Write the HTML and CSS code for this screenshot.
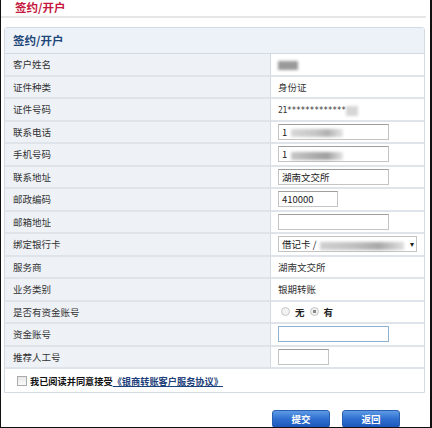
FILE: index.html
```html
<!DOCTYPE html>
<html lang="zh-CN">
<head>
    <meta charset="UTF-8">
    <title>签约/开户</title>
    <link rel="stylesheet" href="styles.css">
</head>
<body>
<div class="frame">

    <!-- Page title -->
    <div class="page-title">签约/开户</div>

    <!-- Form panel -->
    <div class="panel">
        <div class="panel-head">签约/开户</div>
        <table class="form-table">
            <tr><td class="label">客户姓名</td><td class="value"><span class="blur blur-name"></span></td></tr>
            <tr><td class="label">证件种类</td><td class="value">身份证</td></tr>
            <tr><td class="label">证件号码</td><td class="value"><span class="mono">21*************</span><span class="blur blur-light"></span></td></tr>
            <tr><td class="label">联系电话</td><td class="value"><div class="input w110">1<span class="blur blur-phone"></span></div></td></tr>
            <tr><td class="label">手机号码</td><td class="value"><div class="input w110">1<span class="blur blur-phone dark"></span></div></td></tr>
            <tr><td class="label">联系地址</td><td class="value"><div class="input w110">湖南文交所</div></td></tr>
            <tr><td class="label">邮政编码</td><td class="value"><div class="input w60">410000</div></td></tr>
            <tr><td class="label">邮箱地址</td><td class="value"><div class="input w110"></div></td></tr>
            <tr><td class="label">绑定银行卡</td><td class="value"><div class="select">借记卡 /<span class="blur blur-card"></span><span class="arrow">▾</span></div></td></tr>
            <tr><td class="label">服务商</td><td class="value">湖南文交所</td></tr>
            <tr><td class="label">业务类别</td><td class="value">银期转账</td></tr>
            <tr><td class="label">是否有资金账号</td><td class="value">
                <span class="radios">
                    <span class="radio"></span><span class="radio-text">无</span>
                    <span class="radio checked"></span><span class="radio-text">有</span>
                </span>
            </td></tr>
            <tr><td class="label">资金账号</td><td class="value"><div class="input w110 focus"></div></td></tr>
            <tr><td class="label">推荐人工号</td><td class="value"><div class="input w50"></div></td></tr>
        </table>
        <div class="agree">
            <span class="checkbox"></span>
            <span class="agree-text">我已阅读并同意接受</span><a class="agree-link" href="#">《银商转账客户服务协议》</a>
        </div>
    </div>

    <!-- Buttons -->
    <div class="actions">
        <button class="btn">提交</button>
        <button class="btn">返回</button>
    </div>

</div>
</body>
</html>
```

FILE: styles.css
```css
body {
    margin: 0;
    background-color: #ffffff;
    font-family: "Noto Sans CJK SC", "Noto Sans", sans-serif;
    font-size: 9.5px;
    color: #333333;
}

/* Outer window frame */
.frame {
    width: 432px;
    height: 428px;
    box-sizing: border-box;
    border-left: 1px solid #111;
    border-right: 2px solid #111;
    border-bottom: 1px solid #111;
    overflow: hidden;
}

/* Page title */
.page-title {
    height: 16px;
    line-height: 14px;
    padding-left: 14px;
    font-size: 11.5px;
    font-weight: bold;
    color: #c4173d;
    border-bottom: 2px solid #e6e6e6;
    margin-right: 4px;
}

/* Panel */
.panel {
    margin: 9px 5px 0 3px;
    border: 1px solid #d3dae3;
    border-radius: 3px 3px 0 0;
}

.panel-head {
    height: 25px;
    line-height: 25px;
    padding-left: 8px;
    font-size: 11.5px;
    font-weight: bold;
    color: #1d4679;
    background-color: #edf2f8;
    border-bottom: 1px solid #d3dae3;
}

/* Form rows */
.form-table {
    width: 100%;
    border-collapse: separate;
    border-spacing: 0;
}

.form-table td {
    height: 20.5px;
    padding: 0;
    border-bottom: 2px solid #dfe4ea;
    vertical-align: middle;
}

.form-table .label {
    width: 257px;
    padding-left: 8px;
    background-color: #eef2f7;
    border-right: 1px solid #d3dae3;
    color: #333;
}

.form-table .value {
    padding-left: 7px;
    color: #333;
}

.mono {
    font-family: "DejaVu Sans Mono", monospace;
    font-size: 8px;
    letter-spacing: -0.3px;
}

/* Blurred (masked) personal data */
.blur {
    display: inline-block;
    vertical-align: middle;
    filter: blur(1.5px);
}

.blur-name {
    width: 20px;
    height: 9px;
    background-color: #9a9a9a;
}

.blur-light {
    width: 12px;
    height: 10px;
    background-color: #d6d6d6;
}

.blur-phone {
    width: 52px;
    height: 8px;
    margin-left: 4px;
    background: linear-gradient(90deg, #d8d8d8, #c4c4c4 50%, #b0b0b0 70%, #e6e6e6);
}

.blur-phone.dark {
    background: linear-gradient(90deg, #c8c8c8, #a8a8a8 50%, #a0a0a0 70%, #e6e6e6);
}

.blur-card {
    width: 84px;
    height: 8px;
    margin-left: 4px;
    background: linear-gradient(90deg, #d0d0d0, #c0c0c0 40%, #a8a8a8 70%, #e0e0e0);
}

/* Inputs */
.input {
    height: 14px;
    line-height: 14px;
    box-sizing: content-box;
    padding-left: 3px;
    border: 1px solid #c4c4c4;
    border-top-color: #9e9e9e;
    background-color: #fff;
    color: #222;
}

.w110 { width: 106px; }
.w60 { width: 55px; }
.w50 { width: 46px; }

.input.focus {
    border-color: #8fb1d1;
}

.select {
    width: 134px;
    height: 14px;
    line-height: 14px;
    padding-left: 3px;
    border: 1px solid #c4c4c4;
    position: relative;
    color: #222;
}

.select .arrow {
    position: absolute;
    right: 2px;
    top: 0;
    font-size: 8px;
    color: #222;
}

/* Radio buttons */
.radios {
    display: inline-flex;
    align-items: center;
    padding-left: 3px;
}

.radio {
    width: 7px;
    height: 7px;
    border: 1px solid #c6c6c6;
    border-radius: 50%;
    background-color: #f2f2f2;
    box-sizing: content-box;
}

.radio.checked {
    background: radial-gradient(circle, #8a8a8a 0 1.5px, #f0f0f0 2px);
}

.radio-text {
    margin: 0 5px 0 5px;
    font-weight: bold;
    color: #222;
}

/* Agreement line */
.agree {
    height: 23px;
    display: flex;
    align-items: center;
    padding-left: 12px;
    font-size: 9.2px;
    font-weight: bold;
    color: #111;
}

.checkbox {
    width: 8px;
    height: 8px;
    border: 1px solid #aaa;
    background: linear-gradient(#e8e8e8, #fafafa);
    margin-right: 3px;
}

.agree-link {
    color: #1d3f7a;
    text-decoration: underline;
}

/* Buttons */
.actions {
    display: flex;
    justify-content: flex-end;
    gap: 12px;
    padding: 17px 30px 0 0;
}

.btn {
    width: 58px;
    height: 18px;
    padding: 0;
    border: 1px solid #2a5fb0;
    border-radius: 3px;
    background: linear-gradient(#5d9ae6, #2f6fcf 50%, #1d58bb);
    color: #ffffff;
    font-family: "Noto Sans CJK SC", sans-serif;
    font-size: 9.5px;
    font-weight: bold;
}
```
